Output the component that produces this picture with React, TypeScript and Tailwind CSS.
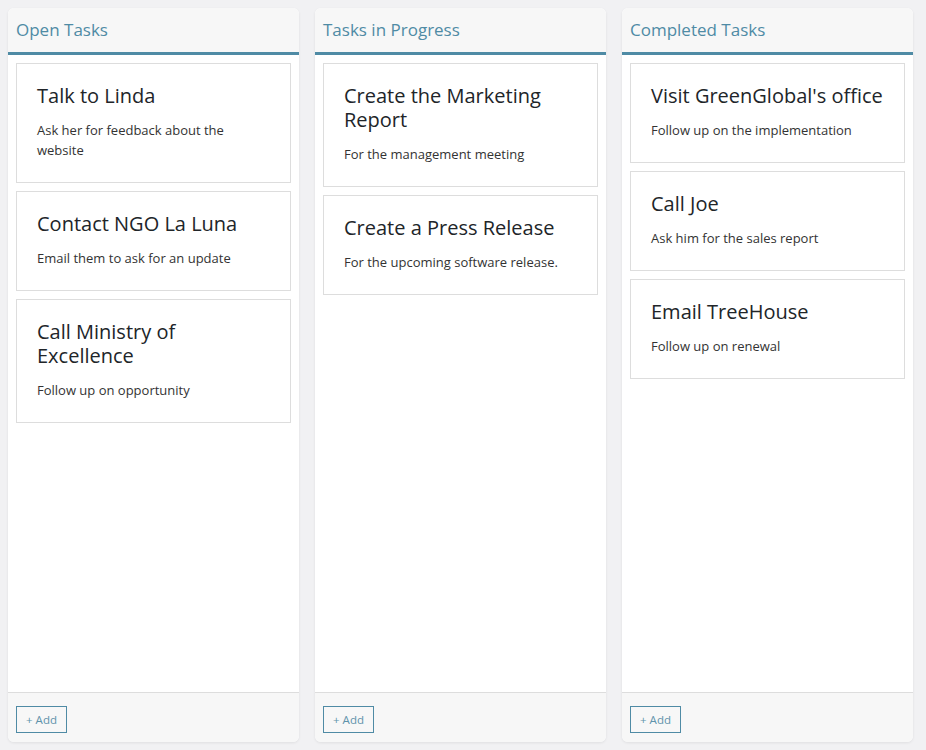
import React from "react";

type Task = { title: string; description: string };

const columns: { name: string; tasks: Task[] }[] = [
  {
    name: "Open Tasks",
    tasks: [
      { title: "Talk to Linda", description: "Ask her for feedback about the website" },
      { title: "Contact NGO La Luna", description: "Email them to ask for an update" },
      { title: "Call Ministry of Excellence", description: "Follow up on opportunity" },
    ],
  },
  {
    name: "Tasks in Progress",
    tasks: [
      { title: "Create the Marketing Report", description: "For the management meeting" },
      { title: "Create a Press Release", description: "For the upcoming software release." },
    ],
  },
  {
    name: "Completed Tasks",
    tasks: [
      { title: "Visit GreenGlobal's office", description: "Follow up on the implementation" },
      { title: "Call Joe", description: "Ask him for the sales report" },
      { title: "Email TreeHouse", description: "Follow up on renewal" },
    ],
  },
];

const TaskCard: React.FC<{ task: Task }> = ({ task }) => (
  <div className="border border-[#dddddd] bg-white px-5 pt-5 pb-[22px]">
    <h3 className="text-[20px] leading-6 text-[#212529] mb-3">{task.title}</h3>
    <p className="text-[13px] leading-5 text-[#333333]">{task.description}</p>
  </div>
);

export default function App() {
  return (
    <div
      className="h-screen bg-[#f1f1f3] p-2 flex gap-4"
      style={{ fontFamily: "'Open Sans', 'Noto Sans', sans-serif" }}
    >
      {columns.map((col) => (
        <section
          key={col.name}
          className="w-[291px] h-full flex flex-col bg-white rounded-md shadow-[0_1px_3px_rgba(0,0,0,0.08)] overflow-hidden"
        >
          {/* Header */}
          <div className="h-[47px] shrink-0 flex items-center px-2 bg-[#f7f7f7] border-b-[3px] border-[#4f8ba5]">
            <h2 className="text-[17px] text-[#4f8ba5]">{col.name}</h2>
          </div>

          {/* Cards */}
          <div className="flex-1 flex flex-col gap-2 p-2">
            {col.tasks.map((t) => (
              <TaskCard key={t.title} task={t} />
            ))}
          </div>

          {/* Footer */}
          <div className="shrink-0 bg-[#f7f7f7] border-t border-[#dddddd] px-2 pt-[13px] pb-[9px]">
            <button className="h-[27px] w-[51px] border border-[#4f8ba5] text-[11.5px] text-[#5f93ab]">
              + Add
            </button>
          </div>
        </section>
      ))}
    </div>
  );
}
